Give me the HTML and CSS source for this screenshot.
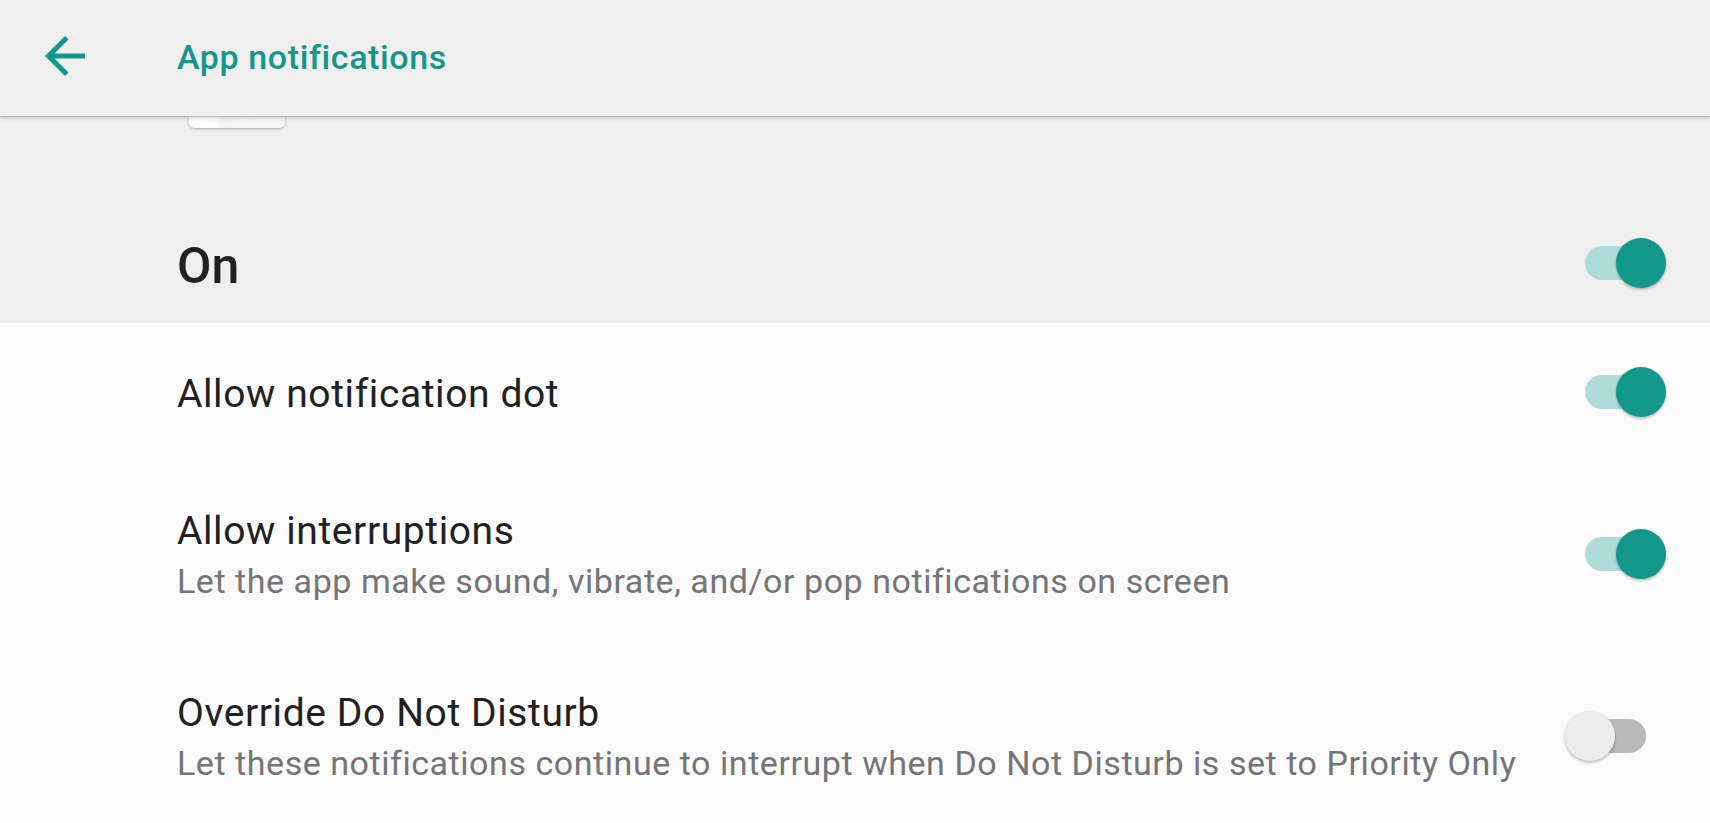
FILE: index.html
```html
<!DOCTYPE html>
<html lang="en">
<head>
<meta charset="utf-8">
<title>App notifications</title>
<link rel="stylesheet" href="styles.css">
</head>
<body>
<header class="toolbar">
  <button class="back" aria-label="Back">
    <svg viewBox="0 0 24 24" width="60" height="60"><path d="M20 11H7.83l5.59-5.59L12 4l-8 8 8 8 1.41-1.41L7.83 13H20v-2z" fill="#15968a"/></svg>
  </button>
  <h1 class="toolbar-title">App notifications</h1>
</header>
<section class="master">
  <div class="peek"></div>
  <div class="master-row">
    <span class="master-label">On</span>
    <span class="switch on master-switch"><span class="track"></span><span class="thumb"></span></span>
  </div>
</section>
<main class="list">
  <div class="row row-single">
    <div class="text"><div class="title">Allow notification dot</div></div>
    <span class="switch on"><span class="track"></span><span class="thumb"></span></span>
  </div>
  <div class="row">
    <div class="text">
      <div class="title">Allow interruptions</div>
      <div class="summary">Let the app make sound, vibrate, and/or pop notifications on screen</div>
    </div>
    <span class="switch on"><span class="track"></span><span class="thumb"></span></span>
  </div>
  <div class="row">
    <div class="text">
      <div class="title">Override Do Not Disturb</div>
      <div class="summary">Let these notifications continue to interrupt when Do Not Disturb is set to Priority Only</div>
    </div>
    <span class="switch off"><span class="track"></span><span class="thumb"></span></span>
  </div>
</main>
</body>
</html>
```
FILE: styles.css
```css
* { box-sizing: border-box; }
html, body {
  margin: 0;
  padding: 0;
  height: 100%;
  overflow: hidden;
  background: #fafafa;
  font-family: Roboto, "Liberation Sans", sans-serif;
}
.toolbar {
  position: relative;
  z-index: 2;
  height: 116px;
  background: #efefef;
  display: flex;
  align-items: center;
  box-shadow: 0 1px 0 rgba(0,0,0,0.12), 0 2px 4px rgba(0,0,0,0.18);
}
.back {
  width: 60px;
  height: 60px;
  margin-left: 35px;
  margin-top: -4px;
  padding: 0;
  border: 0;
  background: none;
  display: flex;
}
.toolbar-title {
  margin: -2px 0 0 82px;
  font-size: 34px;
  letter-spacing: 0.6px;
  font-weight: 500;
  color: #15968a;
  line-height: 40px;
}
.master {
  background: #efefef;
  height: 207px;
  display: flex;
  flex-direction: column;
}
.peek {
  width: 96px;
  height: 12px;
  margin-left: 189px;
  background: linear-gradient(100deg, #ffffff 0%, #fdfdfd 30%, #f3f3f3 34%, #f6f6f6 100%);
  border-radius: 0 0 6px 6px;
  box-shadow: 0 1px 3px rgba(0,0,0,0.3);
}
.master-row {
  display: flex;
  align-items: center;
  justify-content: space-between;
  padding: 108px 44px 0 177px;
}
.master-label {
  font-size: 50px;
  font-weight: 500;
  line-height: 60px;
  color: #212121;
}
.master-switch { margin-bottom: 6px; }
.list { background: #fafafa; }
.row {
  display: flex;
  align-items: center;
  justify-content: space-between;
  padding: 44px 44px 44px 177px;
}
.row-single {
  padding-top: 43px;
  padding-bottom: 41px;
}
.row-single .switch { margin-bottom: 4px; }
.title {
  font-size: 39px;
  letter-spacing: 0.6px;
  line-height: 48px;
  color: #212121;
}
.summary {
  font-size: 34px;
  letter-spacing: 0.55px;
  line-height: 40px;
  margin-top: 6px;
  color: #757575;
}
.switch {
  position: relative;
  flex: none;
  width: 101px;
  height: 52px;
}
.track {
  position: absolute;
  left: 20px;
  top: 9px;
  width: 61px;
  height: 34px;
  border-radius: 17px;
}
.thumb {
  position: absolute;
  top: 1px;
  width: 50px;
  height: 50px;
  border-radius: 50%;
  box-shadow: 0 2px 3px rgba(0,0,0,0.22), 0 0 2px rgba(0,0,0,0.1);
}
.on .track { background: #afdcd8; }
.on .thumb { left: 51px; background: #12978a; }
.off .track { background: #b8b8b8; }
.off .thumb { left: 0; background: #ececec; }
```
